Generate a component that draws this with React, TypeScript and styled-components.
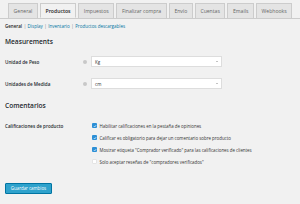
import { FC } from 'react'
import styled, { createGlobalStyle } from 'styled-components'

const GlobalStyle = createGlobalStyle`
  html, body {
    margin: 0;
    padding: 0;
    background: #f1f1f1;
  }
  body {
    font-family: 'Open Sans', 'Liberation Sans', sans-serif;
    color: #444;
  }
`

const tabs = [
  'General',
  'Productos',
  'Impuestos',
  'Finalizar compra',
  'Envío',
  'Cuentas',
  'Emails',
  'Webhooks',
]

const subLinks = ['General', 'Display', 'Inventario', 'Productos descargables']

const reviewOptions = [
  { label: 'Habilitar calificaciones en la pestaña de opiniones', checked: true },
  {
    label: 'Calificar es obligatorio para dejar un comentario sobre producto',
    checked: true,
  },
  {
    label:
      'Mostrar etiqueta "Comprador verificado" para las calificaciones de clientes',
    checked: true,
  },
  { label: 'Solo aceptar reseñas de "compradores verificados"', checked: false },
]

const App: FC = () => {
  return (
    <Page>
      <GlobalStyle />
      <TabBar>
        {tabs.map((t) => (
          <Tab key={t} $active={t === 'Productos'}>
            {t}
          </Tab>
        ))}
      </TabBar>

      <Content>
        <SubNav>
          {subLinks.map((l, i) => (
            <span key={l}>
              {i > 0 && <Sep>|</Sep>}
              <SubLink $current={i === 0}>{l}</SubLink>
            </span>
          ))}
        </SubNav>

        <Heading $top={8}>Measurements</Heading>

        <FieldTable>
          <FieldRow>
            <FieldLabel>Unidad de Peso</FieldLabel>
            <HelpTip />
            <Select>
              <span>Kg</span>
              <Arrow />
            </Select>
          </FieldRow>
          <FieldRow>
            <FieldLabel>Unidades de Medida</FieldLabel>
            <HelpTip />
            <Select>
              <span>cm</span>
              <Arrow />
            </Select>
          </FieldRow>
        </FieldTable>

        <Heading $top={12}>Comentarios</Heading>

        <CheckSection>
          <FieldLabel>Calificaciones de producto</FieldLabel>
          <CheckList>
            {reviewOptions.map((o) => (
              <CheckRow key={o.label}>
                <CheckBox $checked={o.checked}>
                  {o.checked && (
                    <svg viewBox="0 0 10 10" width="4" height="4">
                      <path
                        d="M2 5.2 L4.2 7.4 L8 2.8"
                        fill="none"
                        stroke="#fff"
                        strokeWidth="1.6"
                      />
                    </svg>
                  )}
                </CheckBox>
                <span>{o.label}</span>
              </CheckRow>
            ))}
          </CheckList>
        </CheckSection>

        <SaveButton>Guardar cambios</SaveButton>
      </Content>
    </Page>
  )
}

export default App

const Page = styled.div`
  width: 300px;
  height: 204px;
  overflow: hidden;
  padding-top: 3px;
  box-sizing: border-box;
`
const TabBar = styled.div`
  display: flex;
  gap: 2px;
  padding-left: 8px;
  border-bottom: 1px solid #ccc;
  height: 15px;
`
const Tab = styled.div<{ $active: boolean }>`
  height: 15px;
  box-sizing: border-box;
  padding: 0 4.6px;
  display: flex;
  align-items: center;
  font-size: 5.1px;
  font-weight: ${(p) => (p.$active ? 600 : 400)};
  color: ${(p) => (p.$active ? '#222' : '#666')};
  background: ${(p) => (p.$active ? '#f1f1f1' : '#e4e4e4')};
  border: 1px solid #ccc;
  border-bottom: ${(p) => (p.$active ? '1px solid #f1f1f1' : 'none')};
  white-space: nowrap;
`
const Content = styled.div`
  padding-left: 5px;
`
const SubNav = styled.div`
  margin-top: 4px;
  font-size: 4.5px;
  line-height: 6px;
  white-space: nowrap;
`
const Sep = styled.span`
  color: #888;
  margin: 0 1.5px;
`
const SubLink = styled.span<{ $current: boolean }>`
  color: ${(p) => (p.$current ? '#222' : '#0074a2')};
  font-weight: ${(p) => (p.$current ? 600 : 400)};
`
const Heading = styled.div<{ $top: number }>`
  margin-top: ${(p) => p.$top}px;
  font-size: 6.6px;
  line-height: 9px;
  font-weight: 600;
  color: #23282d;
`
const FieldTable = styled.div`
  margin-top: 10px;
  display: grid;
  row-gap: 11px;
`
const FieldRow = styled.div`
  display: flex;
  align-items: center;
  height: 11px;
`
const FieldLabel = styled.div`
  width: 77px;
  flex-shrink: 0;
  font-size: 4.6px;
  font-weight: 600;
  color: #23282d;
  white-space: nowrap;
`
const HelpTip = styled.span`
  width: 4px;
  height: 4px;
  border-radius: 50%;
  background: #c8c8c8;
  margin-left: 1px;
  margin-right: 4px;
`
const Select = styled.div`
  width: 131px;
  height: 11px;
  box-sizing: border-box;
  background: #fff;
  border: 1px solid #ddd;
  display: flex;
  align-items: center;
  justify-content: space-between;
  padding: 0 3px;
  font-size: 4.5px;
  color: #333;
`
const Arrow = styled.span`
  width: 0;
  height: 0;
  border-left: 1.3px solid transparent;
  border-right: 1.3px solid transparent;
  border-top: 1.8px solid #888;
`
const CheckSection = styled.div`
  margin-top: 9.5px;
  display: flex;
  align-items: flex-start;
  & > ${FieldLabel} {
    line-height: 12px;
  }
`
const CheckList = styled.div`
  display: flex;
  flex-direction: column;
  padding-left: 10px;
`
const CheckRow = styled.div`
  height: 12px;
  display: flex;
  align-items: center;
  gap: 2.5px;
  font-size: 4.4px;
  color: #333;
  white-space: nowrap;
`
const CheckBox = styled.span<{ $checked: boolean }>`
  width: 5px;
  height: 5px;
  box-sizing: border-box;
  border-radius: 1px;
  display: flex;
  align-items: center;
  justify-content: center;
  background: ${(p) => (p.$checked ? '#2c8fd6' : '#fff')};
  border: ${(p) => (p.$checked ? 'none' : '0.5px solid #e4e4e4')};
`
const SaveButton = styled.button`
  margin-top: 15px;
  width: 47px;
  height: 11px;
  padding: 0;
  display: flex;
  align-items: center;
  justify-content: center;
  background: #2ea2cc;
  border: 0.5px solid #0074a2;
  border-radius: 1px;
  color: #fff;
  font-family: inherit;
  font-size: 4.4px;
`
